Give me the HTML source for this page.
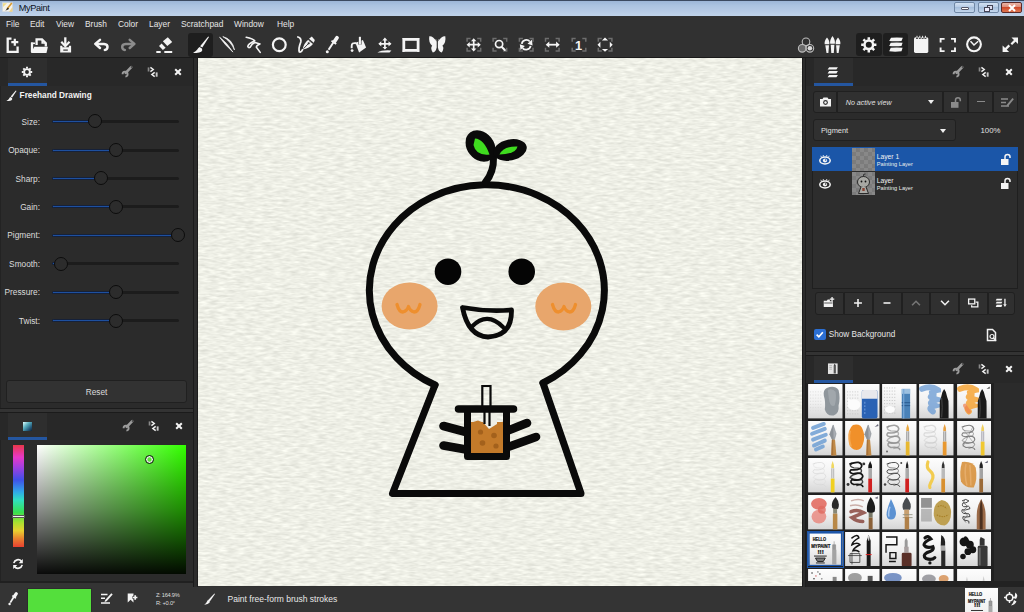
<!DOCTYPE html>
<html><head><meta charset="utf-8"><title>MyPaint</title>
<style>
*{box-sizing:border-box;margin:0;padding:0}
html,body{width:1024px;height:612px;overflow:hidden;background:#313131;font-family:"Liberation Sans",sans-serif;color:#e8e8e8}
.a{position:absolute}
#title{left:0;top:0;width:1024px;height:16px;background:linear-gradient(#9cb6d7 0,#abc3e0 30%,#b7cbe5 70%,#c0d3ea 100%);border-top:1px solid #3b4a60}
#title .t{left:18.700px;top:1.500px;font-size:9.200px;letter-spacing:-0.330px;color:#0a1020;line-height:10px}
.wb{top:2px;height:11px;border:1px solid #6f87a5;border-radius:2px;background:linear-gradient(#d4e2f3,#b3c9e4 50%,#a6bfdd 50%,#c3d6ec)}
#menu{left:0;top:16px;width:1024px;height:16px;background:#313131}
#menu span{position:absolute;top:3px;font-size:8.4px;line-height:10px;color:#e6e6e6}
#tool{left:0;top:32px;width:1024px;height:26px;background:#313131;border-bottom:1px solid #1a1a1a}
.act{background:#1e1e1e;border-radius:3px}
#left{left:0;top:58px;width:193px;height:529px;background:#2b2b2b;box-shadow:inset 1px 0 0 #232323}
#right{left:806px;top:58px;width:218px;height:529px;background:#2b2b2b}
#canvas{left:198px;top:58px;width:604px;height:528px;background:#edeee5;overflow:hidden}
#status{left:0;top:587px;width:1024px;height:25px;background:#343434}
.split{background:#2c2c2c;border-left:1px solid #1b1b1b;border-right:1px solid #1d1d1d}
.hdr{left:0;height:28px;background:#282828}
.tab{top:0;height:28px;width:38.500px;background:#2e2e2e;border-bottom:3px solid #2456a0}
.lbl{font-size:8.3px;line-height:10px;color:#dcdcdc;text-align:right;width:40px;left:0}
.trk{height:3px;background:#1c1c1c;left:52px;width:127px;border-radius:1.500px}
.fil{height:3px;background:#1e50a0;left:52px;border:0.600px solid #15213a;border-radius:1.500px}
.knob{width:14px;height:14px;border-radius:50%;background:#2c2c2c;border:1px solid #0c0c0c}
.btn{background:#303030;border:1px solid #202020;border-radius:3px}
</style></head><body>
<div id="title" class="a"><div class="a t">MyPaint</div>
<!--TITLEICONS_S--><svg class="a" style="left:1px;top:0px" width="14" height="13" viewBox="0 0 14 13"><rect x="1.500" y="1.700" width="10" height="9" fill="#f6f3ea" stroke="#cfd3d8" stroke-width="0.500"/><path d="M2 2.200 H6 L2 6Z" fill="#f0d870" opacity="0.800"/><path d="M11.500 6 V10.700 H8Z" fill="#f0c860" opacity="0.700"/><path d="M10.800 2 L6 8" stroke="#d89a30" stroke-width="1.600"/><path d="M7 6.500 L4.300 9.800 L8 8Z" fill="#1a1a1a"/></svg>
<div class="a wb" style="top:1px;left:954px;width:21px"><div class="a" style="left:6px;top:4px;width:8px;height:3px;background:#fff;border:0.500px solid #556;border-radius:1px"></div></div>
<div class="a wb" style="top:1px;left:977.500px;width:21px"><div class="a" style="left:8px;top:1.500px;width:6px;height:5px;border:1px solid #445;background:#dde"></div><div class="a" style="left:5.500px;top:3.500px;width:6px;height:5px;border:1px solid #445;background:#eef"></div></div>
<div class="a wb" style="top:1px;left:1001px;width:21px;border-color:#5a2a2a;background:linear-gradient(#eab4a6,#dc8672 50%,#cf4a2c 50%,#de7650)"><svg class="a" style="left:5px;top:1px" width="10" height="8" viewBox="0 0 10 8"><path d="M2 1 L8 7 M8 1 L2 7" stroke="#fff" stroke-width="2"/></svg></div>
<!--TITLEICONS_E-->
</div>
<div id="menu" class="a">
<span style="left:6px">File</span><span style="left:30px">Edit</span><span style="left:56px">View</span><span style="left:85px">Brush</span><span style="left:118px">Color</span><span style="left:149px">Layer</span><span style="left:181px">Scratchpad</span><span style="left:234px">Window</span><span style="left:277px">Help</span>
</div>
<div id="tool" class="a">
<!--TOOL_S--><div class="a act" style="left:188px;top:1px;width:25px;height:23.500px"></div>
<div class="a act" style="left:856px;top:1px;width:25.500px;height:23px"></div>
<div class="a act" style="left:883px;top:1px;width:25px;height:23px"></div>
<svg class="a" style="left:0;top:0" width="1024" height="26" viewBox="0 32 1024 26" fill="none" stroke="none">
<g stroke="#f4f4f4" fill="none" stroke-width="2.300">
<!-- new -->
<path d="M11.500 38.700 H7.700 V51.800 H17.600 V46.500"/>
<path d="M14.800 38.700 V45.700 M11.300 42.200 H18.300" stroke-width="2.200"/>
<!-- open -->
<path d="M36.600 45 V39.400 H42 L45.800 43.200 V46.500"/>
<path d="M42.200 39 V43 H46" stroke-width="1.600"/>
<path d="M32 42.500 V52" stroke-width="2.300"/>
<path d="M31 43.300 H35" stroke-width="1.600"/>
<path d="M34.300 46.800 H47.900 L46.500 53 H30.900 Z" fill="#f4f4f4" stroke="none"/>
<!-- save -->
<path d="M65.300 37.300 V45.500" stroke-width="2.300"/>
<path d="M61.300 41.800 L65.300 46.200 L69.500 41.800" stroke-width="2.200"/>
<path d="M60.200 45.700 H62.400 V47.300 H68.900 V45.700 H71.100 V52.600 H60.200Z" fill="#f4f4f4" stroke="none"/>
<path d="M63.300 50.100 H67.800" stroke="#313131" stroke-width="1.200"/>
<!-- undo -->
<path d="M100 39.900 L95.300 43.900 L100 48" stroke-width="2.500" stroke-linecap="round" stroke-linejoin="round"/>
<path d="M96 43.900 H104 Q107.700 44.200 107.500 47 Q107.300 49.800 104.800 50" stroke-width="2.500" stroke-linecap="round"/>
</g>
<g stroke="#8c8c8c" fill="none" stroke-width="2.500" stroke-linecap="round" stroke-linejoin="round">
<path d="M129.700 39.900 L134.400 43.900 L129.700 48"/>
<path d="M133.700 43.900 H125.700 Q122 44.200 122.200 47 Q122.400 49.800 124.900 50"/>
</g>
<!-- eraser -->
<g fill="#f4f4f4">
<path d="M167.800 37.300 L172.200 42.100 L167.300 46 L162.900 41.200Z"/>
<path d="M161.600 43.400 L165.600 47.800 L162.900 50 L159 46Z"/>
<rect x="156.300" y="51" width="4.400" height="2"/><rect x="164.300" y="51" width="7.900" height="2"/>
</g>
<!-- brush -->
<path d="M208.200 36.400 L209 37 L202.300 47.600 L200.100 46.200Z" fill="#f4f4f4"/>
<path d="M199.600 47 L201.900 48.500 Q203 50.300 201.300 51.800 Q198.500 53.500 193 52.700 Q196 51.600 197.300 49.600 Q198.200 47.800 199.600 47Z" fill="#f4f4f4"/>
<!-- ink -->
<path d="M219.600 37.200 Q226.500 42 232.900 52.100 Q224.500 44.500 219.600 37.200Z" fill="#f4f4f4" stroke="#f4f4f4" stroke-width="0.700"/>
<path d="M222.800 36.600 Q232.500 39 234.500 50 Q231 41.500 222.800 36.600Z" fill="#f4f4f4" stroke="#f4f4f4" stroke-width="0.700"/>
<!-- freehand -->
<path d="M246.200 37.200 Q253 38.500 254.700 40.800 Q248 44 247.800 46.500 Q248.500 48.300 250 47.300 Q252 43.500 255 42.600 L260 43.900 Q256 45.500 256.400 47.200 L260.200 52.400" stroke="#f4f4f4" stroke-width="1.600" fill="none" stroke-linecap="round" stroke-linejoin="round"/>
<!-- circle -->
<circle cx="279.300" cy="44.800" r="6.400" stroke="#f4f4f4" stroke-width="2.200"/>
<!-- pen -->
<path d="M297.900 37 Q301.500 38 300.800 42 Q298 49 299.500 52 Q301.500 52.500 302.500 49.800" stroke="#f4f4f4" stroke-width="1.800" fill="none" stroke-linecap="round"/>
<path d="M302.800 49.400 Q303.500 43.500 308.300 39.800 L313.200 43.800 Q309.500 48.500 302.800 49.400Z" fill="#f4f4f4"/>
<path d="M309 38.800 L311.800 36.600 L314.800 40 L313.800 42.800Z" fill="#f4f4f4"/>
<path d="M303.500 48.700 L308.500 43.500" stroke="#313131" stroke-width="0.900"/>
<circle cx="308.700" cy="43.300" r="1.100" fill="#313131"/>
<path d="M308.700 40.300 L312.800 43.600" stroke="#313131" stroke-width="0.700"/>
<!-- picker -->
<path d="M337 37.700 L334.300 41.700" stroke="#f4f4f4" stroke-width="3.800" stroke-linecap="round"/>
<path d="M334 41.500 L328.600 49.800" stroke="#f4f4f4" stroke-width="2"/>
<path d="M331.500 40.800 L336.200 44" stroke="#f4f4f4" stroke-width="1.700"/>
<circle cx="327.300" cy="51.800" r="1.500" fill="#f4f4f4"/>
<!-- fill -->
<path d="M355.400 42.700 L362.900 40 L366.100 47.600 L359.100 52.400Z" fill="#f4f4f4"/>
<path d="M359.900 38 V44.600" stroke="#313131" stroke-width="3.200"/>
<path d="M359.900 36.800 V44.600" stroke="#f4f4f4" stroke-width="2.100"/>
<path d="M356 43.200 Q351.600 42.500 351.700 46 V48.200" stroke="#f4f4f4" stroke-width="1.900" fill="none"/>
<circle cx="352.100" cy="50.600" r="1.400" fill="#f4f4f4"/>
<!-- move layer -->
<path d="M384.900 39 V48.500 M379.500 43.800 H390.300" stroke="#f4f4f4" stroke-width="1.700"/>
<path d="M384.900 37.600 L382.300 40.600 H387.500Z M384.900 49.600 L382.500 47 H387.300Z M378.300 43.800 L381.300 41.200 V46.400Z M391.500 43.800 L388.500 41.200 V46.400Z" fill="#f4f4f4"/>
<path d="M377.400 52.600 Q382 49.600 391.400 50.400 L389.500 52.600Z" fill="#f4f4f4"/>
<!-- frame -->
<rect x="403.800" y="39.400" width="14.300" height="11" stroke="#f4f4f4" stroke-width="2.800"/>
<path d="M402.600 38.600 h2 M417.200 38.600 h2 M402.600 51.300 h2 M417.200 51.300 h2" stroke="#f4f4f4" stroke-width="1.400"/>
<!-- butterfly -->
<path d="M436.700 41.500 Q432.500 35.500 429.300 36.200 Q428.300 42.500 432.200 45.800 Q430 48 432.800 52.600 Q435.800 52 436.700 47.500Z M437.900 41.500 Q442.100 35.500 445.300 36.200 Q446.300 42.500 442.400 45.800 Q444.600 48 441.800 52.600 Q438.800 52 437.900 47.500Z" fill="#f4f4f4"/>
<path d="M436.300 40.500 L435.800 39.300 M438.300 40.500 L438.800 39.300" stroke="#f4f4f4" stroke-width="0.600"/>
<!-- view tools frames -->
<g stroke="#6e6e6e" stroke-width="1.500" fill="none">
<g id="fr"><path d="M467.100 41.800 V38.600 H470.600 M477.200 38.600 H480.700 V41.800 M480.700 47.800 V51 H477.200 M470.600 51 H467.100 V47.800"/></g>
<use href="#fr" x="26"/><use href="#fr" x="52.300"/><use href="#fr" x="78.400"/><use href="#fr" x="105.100"/><use href="#fr" x="131.200"/>
</g>
<!-- pan -->
<path d="M473.700 40 V49.500 M468.500 44.700 H479" stroke="#f4f4f4" stroke-width="1.700"/>
<path d="M473.700 38.300 L471 41.300 H476.400Z M473.700 51.400 L471 48.400 H476.400Z M466.600 44.700 L469.700 42 V47.400Z M480.800 44.700 L477.700 42 V47.400Z" fill="#f4f4f4"/>
<!-- zoom -->
<circle cx="499.100" cy="44.100" r="3.600" stroke="#f4f4f4" stroke-width="1.700"/>
<path d="M501.800 47 L504.800 50" stroke="#f4f4f4" stroke-width="2" stroke-linecap="round"/>
<!-- rotate -->
<path d="M521.800 43.800 A4.600 4.600 0 0 1 529.800 41.500 M530.600 45.800 A4.600 4.600 0 0 1 522.600 48.100" stroke="#f4f4f4" stroke-width="1.800" fill="none"/>
<path d="M531.900 39.800 L532.600 45.400 L527.500 43.800Z M520.500 49.900 L519.800 44.300 L524.900 45.900Z" fill="#f4f4f4"/>
<!-- mirror -->
<path d="M548 44.700 H557.500" stroke="#f4f4f4" stroke-width="1.800"/>
<path d="M545.700 44.700 L549.300 41.600 V47.800Z M559.700 44.700 L556.100 41.600 V47.800Z" fill="#f4f4f4"/>
<!-- fit -->
<path d="M605 37.600 L601.900 40.500 H608.100Z M605 51.800 L601.900 48.900 H608.100Z M597.500 44.700 L600.400 41.700 V47.700Z M612.700 44.700 L609.800 41.700 V47.700Z" fill="#f4f4f4"/>
<!-- colour circles -->
<g stroke="#bdbdbd" stroke-width="1.100" fill="none">
<circle cx="806" cy="41.800" r="3.800"/><circle cx="802.200" cy="48.300" r="3.800" fill="#6a6a6a"/><circle cx="809.900" cy="48.300" r="3.800"/><circle cx="809.900" cy="48.300" r="2.300" fill="#dcdcdc" stroke="none"/>
</g>
<!-- brushes -->
<g fill="#f4f4f4">
<path d="M827 37.500 Q830 41 829.300 44.300 H824.700 Q824 41 827 37.500Z M825.300 45.300 H829 L828.400 53 H826.500Z"/>
<path d="M832.500 36 Q835.500 40 834.800 43.800 H830.200 Q829.500 40 832.500 36Z M830.700 44.800 H834.400 L833.800 53 H831.300Z"/>
<path d="M838 37.500 Q841 41 840.300 44.300 H835.700 Q835 41 838 37.500Z M836.100 45.300 H839.800 L838.600 53 H836.800Z"/>
</g>
<!-- gear -->
<g transform="translate(868.800 44.800)">
<circle r="4.300" stroke="#f4f4f4" stroke-width="2.500" fill="none"/>
<g stroke="#f4f4f4" stroke-width="2.500"><path d="M0 -7.600 V-5 M0 7.600 V5 M-7.600 0 H-5 M7.600 0 H5 M-5.400 -5.400 L-3.600 -3.600 M5.400 5.400 L3.600 3.600 M-5.400 5.400 L-3.600 3.600 M5.400 -5.400 L3.600 -3.600"/></g>
</g>
<!-- layers -->
<g fill="#f4f4f4"><path d="M891 37.800 Q897 37 902.800 37.800 L901.500 41 Q895 41.500 889.200 41Z M890.700 42.800 Q897 42.200 902.600 42.800 L901.500 46 Q895 46.600 889.200 46Z M890.700 47.800 Q897 47.200 902.600 47.800 L901.500 51.300 Q895 52 889.200 51.300Z"/></g>
<!-- notepad -->
<path d="M915.500 37.300 Q914 37.300 914 38.800 V51.200 Q914 52.900 915.500 52.900 H926.800 Q928.300 52.900 928.300 51.200 V38.800 Q928.300 37.300 926.800 37.300Z" fill="#f4f4f4"/>
<path d="M917 35.600 V39 M919.800 35.600 V39 M922.600 35.600 V39 M925.400 35.600 V39" stroke="#313131" stroke-width="1.800"/>
<path d="M917 35.800 V38.200 M919.800 35.800 V38.200 M922.600 35.800 V38.200 M925.400 35.800 V38.200" stroke="#f4f4f4" stroke-width="1"/>
<!-- fullscreen -->
<path d="M940.600 42.500 V38.900 H944.600 M951 38.900 H955 V42.500 M955 47.500 V51.100 H951 M944.600 51.100 H940.600 V47.500" stroke="#f4f4f4" stroke-width="1.900"/>
<!-- clock -->
<circle cx="974" cy="44.300" r="6.900" stroke="#f4f4f4" stroke-width="2.100"/>
<path d="M970.500 41.300 L974 45 L978.200 41.300" stroke="#f4f4f4" stroke-width="1.500" fill="none"/>
<!-- expand -->
<path d="M1011.500 37.600 H1018 V44.100Z M1002.600 45.600 V52.100 H1009.100Z" fill="#f4f4f4"/>
<path d="M1016 39.600 L1011.300 44.300 M1004.600 50.100 L1009.300 45.400" stroke="#f4f4f4" stroke-width="2.200"/>
</svg>
<div class="a" style="left:575px;top:6.700px;font-size:12.800px;font-weight:bold;line-height:13px;color:#f4f4f4">1</div>
<!--TOOL_E-->
</div>
<div id="left" class="a">
<!--LEFT_S--><div class="a hdr" style="top:0;width:193px"></div>
<div class="a tab" style="left:8px"></div>
<svg class="a" style="left:19px;top:6.1px" width="16" height="16" viewBox="-8 -8 16 16"><circle r="2.900" stroke="#f4f4f4" stroke-width="1.900" fill="none"/><g stroke="#f4f4f4" stroke-width="1.900"><path d="M0 -5.200 V-3.400 M0 5.200 V3.400 M-5.200 0 H-3.400 M5.200 0 H3.400 M-3.700 -3.700 L-2.500 -2.500 M3.700 3.700 L2.500 2.500 M-3.700 3.700 L-2.500 2.500 M3.700 -3.700 L2.500 -2.500"/></g></svg>
<svg class="a" style="left:118.4px;top:4.0px" width="70" height="20" viewBox="-60 -10 70 20">
<path d="M-46.800 -4.800 L-52.300 0.800" stroke="#9c9c9c" stroke-width="2.600" stroke-linecap="round" fill="none"/>
<circle cx="-46.600" cy="-5" r="0.700" fill="#2a2a2a"/>
<path d="M-55.400 2.200 A2.500 2.500 0 1 1 -52.600 4.600" stroke="#9c9c9c" stroke-width="1.900" fill="none"/>
<rect x="-30.300" y="-4.600" width="1.700" height="4.100" fill="#8a8a8a"/>
<path d="M-27.600 -4.600 L-24.800 -2.500 L-27.600 -0.400" stroke="#f0f0f0" stroke-width="1.500" fill="none"/>
<path d="M-23.300 0.400 L-26.100 2.500 L-23.300 4.600" stroke="#f0f0f0" stroke-width="1.500" fill="none"/>
<rect x="-22.300" y="0.400" width="1.900" height="4.300" fill="#c8c8c8"/>
<path d="M-2.800 -2.800 L2.800 2.800 M2.800 -2.800 L-2.800 2.800" stroke="#f4f4f4" stroke-width="2"/>
</svg>
<svg class="a" style="left:5px;top:30px" width="14" height="14" viewBox="5 88 14 14"><path d="M15.800 90.400 L16.500 91 L12.200 97.600 L10.700 96.600Z" fill="#f4f4f4"/><path d="M10.300 97 L12 98.100 Q12.700 99.300 11.500 100.300 Q9.800 101.300 6.300 100.700 Q8.200 100 9 98.700 Q9.500 97.500 10.300 97Z" fill="#f4f4f4"/></svg>
<div class="a" style="left:19.600px;top:32.9px;font-size:8.280px;font-weight:bold;line-height:10px;color:#f2f2f2;white-space:nowrap">Freehand Drawing</div>
<div class="a lbl" style="top:58.6px">Size:</div>
<div class="a trk" style="top:62.1px"></div>
<div class="a fil" style="top:62.1px;width:42.7px"></div>
<div class="a knob" style="left:87.5px;top:56.4px"></div>
<div class="a lbl" style="top:87.0px">Opaque:</div>
<div class="a trk" style="top:90.5px"></div>
<div class="a fil" style="top:90.5px;width:64.3px"></div>
<div class="a knob" style="left:109.1px;top:84.8px"></div>
<div class="a lbl" style="top:115.5px">Sharp:</div>
<div class="a trk" style="top:119.0px"></div>
<div class="a fil" style="top:119.0px;width:49.6px"></div>
<div class="a knob" style="left:94.4px;top:113.3px"></div>
<div class="a lbl" style="top:143.9px">Gain:</div>
<div class="a trk" style="top:147.4px"></div>
<div class="a fil" style="top:147.4px;width:64.2px"></div>
<div class="a knob" style="left:109.0px;top:141.8px"></div>
<div class="a lbl" style="top:172.4px">Pigment:</div>
<div class="a trk" style="top:175.9px"></div>
<div class="a fil" style="top:175.9px;width:126.5px"></div>
<div class="a knob" style="left:171.3px;top:170.2px"></div>
<div class="a lbl" style="top:200.9px">Smooth:</div>
<div class="a trk" style="top:204.4px"></div>
<div class="a fil" style="top:204.4px;width:9.0px"></div>
<div class="a knob" style="left:53.8px;top:198.7px"></div>
<div class="a lbl" style="top:229.3px">Pressure:</div>
<div class="a trk" style="top:232.8px"></div>
<div class="a fil" style="top:232.8px;width:64.2px"></div>
<div class="a knob" style="left:109.0px;top:227.1px"></div>
<div class="a lbl" style="top:257.8px">Twist:</div>
<div class="a trk" style="top:261.2px"></div>
<div class="a fil" style="top:261.2px;width:64.2px"></div>
<div class="a knob" style="left:109.0px;top:255.6px"></div>
<div class="a btn" style="left:6px;top:322px;width:181px;height:23px;background:#323232;text-align:center;font-size:8.300px;line-height:22px;color:#dcdcdc">Reset</div>
<div class="a" style="left:0;top:350px;width:193px;height:5px;background:#333;border-top:1px solid #1b1b1b;border-bottom:1px solid #1b1b1b"></div>
<div class="a hdr" style="top:355px;width:193px;height:27px"></div>
<div class="a tab" style="left:8px;top:355px;height:27px"></div>
<div class="a" style="left:22.500px;top:363.5px;width:9.500px;height:9px;background:linear-gradient(135deg,#dff 0,#5ab 40%,#257 75%,#123 100%)"></div>
<svg class="a" style="left:118.5px;top:358.0px" width="70" height="20" viewBox="-60 -10 70 20">
<path d="M-46.800 -4.800 L-52.300 0.800" stroke="#9c9c9c" stroke-width="2.600" stroke-linecap="round" fill="none"/>
<circle cx="-46.600" cy="-5" r="0.700" fill="#2a2a2a"/>
<path d="M-55.400 2.200 A2.500 2.500 0 1 1 -52.600 4.600" stroke="#9c9c9c" stroke-width="1.900" fill="none"/>
<rect x="-30.300" y="-4.600" width="1.700" height="4.100" fill="#8a8a8a"/>
<path d="M-27.600 -4.600 L-24.800 -2.500 L-27.600 -0.400" stroke="#f0f0f0" stroke-width="1.500" fill="none"/>
<path d="M-23.300 0.400 L-26.100 2.500 L-23.300 4.600" stroke="#f0f0f0" stroke-width="1.500" fill="none"/>
<rect x="-22.300" y="0.400" width="1.900" height="4.300" fill="#c8c8c8"/>
<path d="M-2.800 -2.800 L2.800 2.800 M2.800 -2.800 L-2.800 2.800" stroke="#f4f4f4" stroke-width="2"/>
</svg>
<div class="a" style="left:13px;top:387px;width:11px;height:102px;background:linear-gradient(#e8384a 0,#e838c8 12%,#a040e0 22%,#4050e8 34%,#30a8e8 46%,#30e0c0 54%,#38e050 66%,#a8e030 76%,#e8d030 84%,#e88030 92%,#e84030 100%)"></div>
<div class="a" style="left:12px;top:456.5px;width:13px;height:3px;background:#f4f4f4;border:0.500px solid #555"></div>
<div class="a" style="left:37px;top:387px;width:149px;height:128.500px;background:linear-gradient(to bottom,rgba(0,0,0,0) 0,rgba(0,0,0,0.450) 50%,rgba(0,0,0,0.960) 100%),linear-gradient(to right,#fff,#33ff00)"></div>
<div class="a" style="left:144.5px;top:397.1px;width:9px;height:9px;border-radius:50%;border:1px solid #151515;box-shadow:inset 0 0 0 1.300px #f0f0f0"></div>
<svg class="a" style="left:11.200px;top:499.4px" width="14" height="14" viewBox="0 0 16 16"><path d="M3.200 7 A5 5 0 0 1 12 5 M12.800 9 A5 5 0 0 1 4 11" stroke="#f4f4f4" stroke-width="1.900" fill="none"/><path d="M13.500 2.200 V7 H8.800Z M2.500 13.800 V9 H7.200Z" fill="#f4f4f4"/></svg>
<div class="a" style="left:0;top:522.5px;width:193px;height:2.500px;background:#202020"></div>
<div class="a" style="left:0;top:525px;width:193px;height:4px;background:#343434"></div><!--LEFT_E-->
</div>
<div class="a split" style="left:193px;top:58px;width:5px;height:529px"></div>
<div id="canvas" class="a">
<!--CANVAS_S--><svg class="a" style="left:0;top:0" width="604" height="528" viewBox="198 58 604 528">
<defs>
<filter id="paper" x="0" y="0" width="100%" height="100%" color-interpolation-filters="sRGB">
<feTurbulence type="fractalNoise" baseFrequency="0.11 0.42" numOctaves="2" seed="7"/>
<feColorMatrix type="matrix" values="0.18 0 0 0 0.843  0.18 0 0 0 0.847  0.18 0 0 0 0.811  0 0 0 0 1"/>
</filter>
</defs>
<rect x="198" y="58" width="604" height="528" fill="#eeefe6"/>
<rect x="198" y="58" width="604" height="528" filter="url(#paper)"/>
<!-- cheeks -->
<ellipse cx="409.6" cy="306" rx="28" ry="23.6" fill="#e8a66c"/>
<ellipse cx="563.3" cy="306.5" rx="28" ry="24" fill="#e8a66c"/>
<path d="M397 304.500 Q399 312 403 312 Q407 311 408.500 306.500 Q410 311 414 312 Q418 312 420 304.500" fill="none" stroke="#ee8f2e" stroke-width="3.300" stroke-linecap="round" stroke-linejoin="round"/>
<path d="M552.500 304.500 Q554.500 312 558.500 312 Q562.500 311 564 306.500 Q565.500 311 569.500 312 Q573.500 312 575.500 304.500" fill="none" stroke="#ee8f2e" stroke-width="3.300" stroke-linecap="round" stroke-linejoin="round"/>
<!-- body -->
<path d="M435 385 L392.5 493.5 L581 493.5 L543 383" fill="none" stroke="#0a0a0a" stroke-width="7" stroke-linejoin="round" stroke-linecap="round"/>
<!-- head: open ellipse arc -->
<path d="M435 385 A117.5 105.5 0 1 1 543 383" fill="none" stroke="#0a0a0a" stroke-width="7" stroke-linecap="round"/>
<!-- eyes -->
<circle cx="448" cy="271.7" r="13.3" fill="#050505"/>
<circle cx="521.7" cy="271.7" r="13.3" fill="#050505"/>
<!-- mouth -->
<path d="M462.5 307.5 Q487 312 511.5 310 Q512 336 488 337 Q468 336 462.5 307.5 Z" fill="none" stroke="#0a0a0a" stroke-width="4.800" stroke-linejoin="round"/>
<path d="M472 326.500 Q487 311 503 327" fill="none" stroke="#0a0a0a" stroke-width="4.200" stroke-linecap="round"/>
<!-- sprout -->
<path d="M493.5 157 Q494 172 485.5 182" fill="none" stroke="#0a0a0a" stroke-width="7" stroke-linecap="round"/>
<ellipse cx="480.5" cy="146" rx="13.5" ry="17" transform="rotate(-38 480.5 146)" fill="#0a0a0a"/>
<ellipse cx="510" cy="150" rx="17" ry="10.5" transform="rotate(-12 510 150)" fill="#0a0a0a"/>
<path d="M475 138.5 Q484 139 489.5 154.5 Q476 156 473.5 145 Z" fill="#3fdc1f"/>
<path d="M499.5 154.5 Q503 146 517.5 146.5 Q516 154 499.5 154.5 Z" fill="#3fdc1f"/>
<!-- cup -->
<rect x="471" y="422" width="34" height="31" fill="#c37a2a"/>
<path d="M470 423 L478 420.5 L484 423 L489 428.5 L498 423.5 L503.5 421.5 L505 428 L470 428Z" fill="#c37a2a"/>
<path d="M482 421 L489 429 L497 424 L497 414 L482 414Z" fill="#eeefe6"/>
<circle cx="480.5" cy="432" r="2.6" fill="#a3611c"/><circle cx="494" cy="435.5" r="2.8" fill="#a3611c"/><circle cx="482.5" cy="443" r="2.8" fill="#a3611c"/><circle cx="496" cy="446" r="2.6" fill="#a3611c"/>
<path d="M482.3 409 V386 H490.5 V409 M484.5 412 V424 M489.5 412 V426" fill="none" stroke="#0a0a0a" stroke-width="2.2"/>
<path d="M458.5 409 H513.5" stroke="#0a0a0a" stroke-width="7.5" stroke-linecap="round"/>
<path d="M467.5 411 V456.5 H506.5 V411" fill="none" stroke="#0a0a0a" stroke-width="7" stroke-linejoin="round"/>
<!-- arms -->
<path d="M443.5 426 L466 432 M443.5 445.5 L466 449.5 M508 430.5 L527 423 M508 447 L536 437" stroke="#0a0a0a" stroke-width="8.6" stroke-linecap="round"/>
</svg>
<!--CANVAS_E-->
</div>
<div class="a split" style="left:802px;top:58px;width:4px;height:529px"></div>
<div id="right" class="a">
<!--RIGHT_S--><div class="a hdr" style="top:0;width:218px;height:28px"></div>
<div class="a tab" style="left:8px;top:0"></div>
<svg class="a" style="left:18px;top:6px" width="16" height="16" viewBox="0 0 16 16"><path d="M5.200 3.300 H13.900 L12.400 5.600 H3.600Z M5.200 7.100 H13.900 L12.400 9.400 H3.600Z M5.200 10.900 H13.900 L12.400 13.300 H3.600Z" fill="#f4f4f4"/></svg>
<svg class="a" style="left:142.9px;top:4.0px" width="70" height="20" viewBox="-60 -10 70 20">
<path d="M-46.800 -4.800 L-52.300 0.800" stroke="#9c9c9c" stroke-width="2.600" stroke-linecap="round" fill="none"/>
<circle cx="-46.600" cy="-5" r="0.700" fill="#2a2a2a"/>
<path d="M-55.400 2.200 A2.500 2.500 0 1 1 -52.600 4.600" stroke="#9c9c9c" stroke-width="1.900" fill="none"/>
<rect x="-30.300" y="-4.600" width="1.700" height="4.100" fill="#8a8a8a"/>
<path d="M-27.600 -4.600 L-24.800 -2.500 L-27.600 -0.400" stroke="#f0f0f0" stroke-width="1.500" fill="none"/>
<path d="M-23.300 0.400 L-26.100 2.500 L-23.300 4.600" stroke="#f0f0f0" stroke-width="1.500" fill="none"/>
<rect x="-22.300" y="0.400" width="1.900" height="4.300" fill="#c8c8c8"/>
<path d="M-2.800 -2.800 L2.800 2.800 M2.800 -2.800 L-2.800 2.800" stroke="#f4f4f4" stroke-width="2"/>
</svg>
<div class="a btn" style="left:6.5px;top:32.5px;width:24.1px;height:22.5px;border-radius:3px 0 0 3px"><svg class="a" style="left:5px;top:4.500px" width="13" height="12" viewBox="0 0 13 12"><path d="M1 3 H3.500 L4.500 1.500 H8.500 L9.500 3 H12 V10.500 H1Z" fill="#f2f2f2"/><circle cx="6.500" cy="6.500" r="2.400" fill="#303030"/><circle cx="6.500" cy="6.500" r="1.200" fill="#f2f2f2"/></svg></div>
<div class="a btn" style="left:30.6px;top:32.5px;width:106.6px;height:22.5px;border-radius:0"><div class="a" style="left:8.200px;top:6.800px;font-size:7.100px;font-style:italic;line-height:10px;color:#e0e0e0;white-space:nowrap">No active view</div><div class="a" style="left:90.400px;top:8.400px;border:3.700px solid transparent;border-top:4px solid #f0f0f0;border-bottom:0"></div></div>
<div class="a btn" style="left:137.2px;top:32.5px;width:24.8px;height:22.5px;border-radius:0"><svg class="a" style="left:6.300px;top:4.200px" width="12" height="13" viewBox="0 0 12 13"><rect x="1" y="6" width="7.500" height="5.800" fill="#8a8a8a"/><path d="M5.500 6 V4 Q5.500 1.700 8 1.700 Q10.300 1.700 10.300 4 V5.200" stroke="#8a8a8a" stroke-width="1.500" fill="none"/></svg></div>
<div class="a btn" style="left:162.0px;top:32.5px;width:25.0px;height:22.5px;border-radius:0"><div class="a" style="left:8.400px;top:9.300px;width:7.600px;height:1.700px;background:#8a8a8a"></div></div>
<div class="a btn" style="left:187.0px;top:32.5px;width:25.0px;height:22.5px;border-radius:0 3px 3px 0"><svg class="a" style="left:5.500px;top:4.500px" width="14" height="13" viewBox="0 0 14 13"><path d="M1 3 H8 M1 6.500 H6 M1 10 H9" stroke="#8a8a8a" stroke-width="1.600"/><path d="M12.500 2 L7 8.500 L6.500 10.500 L8.500 9.800 L13.800 3.200Z" fill="#8a8a8a"/></svg></div>
<div class="a btn" style="left:6.5px;top:61.3px;width:143.5px;height:22.2px;"><div class="a" style="left:7.400px;top:6px;font-size:7.450px;line-height:10px;color:#e0e0e0">Pigment</div><div class="a" style="left:126.400px;top:8.700px;border:3.700px solid transparent;border-top:4px solid #f0f0f0;border-bottom:0"></div></div>
<div class="a" style="left:174.5px;top:67.5px;font-size:7.850px;line-height:10px;color:#e0e0e0">100%</div>
<div class="a" style="left:6px;top:89px;width:206px;height:141.500px;background:#2d2d2d;border:1px solid #1f1f1f"></div>
<div class="a" style="left:6px;top:89.2px;width:206px;height:24.300px;background:#1b56a8"></div>
<svg class="a" style="left:11.8px;top:96.5px" width="14" height="10" viewBox="0 0 14 10"><ellipse cx="7" cy="5.500" rx="5.200" ry="3.500" fill="#1b56a8" stroke="#f6f6f6" stroke-width="1.500"/><circle cx="7" cy="5.500" r="2.100" fill="#f6f6f6"/><circle cx="7.600" cy="5" r="0.800" fill="#1b56a8"/><path d="M3.500 2.200 L2.800 0.800 M5.500 1.400 L5.200 0 M8.500 1.400 L8.800 0 M10.500 2.200 L11.200 0.800" stroke="#f6f6f6" stroke-width="0.800"/></svg>
<div class="a" style="left:46.3px;top:89.7px;width:22.700px;height:23.500px;background-color:#888;background-image:linear-gradient(45deg,#7c7c7c 25%,transparent 25%,transparent 75%,#7c7c7c 75%),linear-gradient(45deg,#7a7a7a 25%,transparent 25%,transparent 75%,#7c7c7c 75%);background-size:8px 8px;background-position:0 0,4px 4px"></div>
<div class="a" style="left:70.8px;top:93.5px;font-size:6.700px;line-height:9px;color:#f2f2f2;white-space:nowrap">Layer 1</div>
<div class="a" style="left:70.8px;top:102.3px;font-size:5.650px;line-height:8px;color:#ececec;white-space:nowrap">Painting Layer</div>
<svg class="a" style="left:194.0px;top:94.7px" width="12" height="13" viewBox="0 0 12 13"><rect x="1" y="6" width="7.500" height="6" fill="#f4f4f4"/><path d="M5 6 V3.800 Q5 1.500 7.500 1.500 Q10 1.500 10 3.800 V5" stroke="#f4f4f4" stroke-width="1.500" fill="none"/></svg>
<svg class="a" style="left:11.8px;top:120.6px" width="14" height="10" viewBox="0 0 14 10"><ellipse cx="7" cy="5.500" rx="5.200" ry="3.500" fill="#2c2c2c" stroke="#f6f6f6" stroke-width="1.500"/><circle cx="7" cy="5.500" r="2.100" fill="#f6f6f6"/><circle cx="7.600" cy="5" r="0.800" fill="#2c2c2c"/><path d="M3.500 2.200 L2.800 0.800 M5.500 1.400 L5.200 0 M8.500 1.400 L8.800 0 M10.500 2.200 L11.200 0.800" stroke="#f6f6f6" stroke-width="0.800"/></svg>
<div class="a" style="left:46.3px;top:113.8px;width:22.700px;height:23.500px;background-color:#888;background-image:linear-gradient(45deg,#7c7c7c 25%,transparent 25%,transparent 75%,#7c7c7c 75%),linear-gradient(45deg,#7a7a7a 25%,transparent 25%,transparent 75%,#7c7c7c 75%);background-size:8px 8px;background-position:0 0,4px 4px"><svg class="a" style="left:2px;top:1px" width="19" height="22" viewBox="0 0 19 22"><ellipse cx="9.500" cy="9" rx="6" ry="5.500" fill="#a8a8a4" stroke="#2a2a2a" stroke-width="1"/><path d="M7 14 L4.500 20.500 H14.500 L12 14" fill="#a8a8a4" stroke="#2a2a2a" stroke-width="1"/><path d="M9.500 3.500 V1.500 L11.500 1" stroke="#222" stroke-width="0.800" fill="none"/><circle cx="7.500" cy="8.500" r="0.900" fill="#111"/><circle cx="11.500" cy="8.500" r="0.900" fill="#111"/><rect x="8.300" y="15" width="2.400" height="3" fill="#843"/></svg></div>
<div class="a" style="left:70.8px;top:117.6px;font-size:6.700px;line-height:9px;color:#f2f2f2;white-space:nowrap">Layer</div>
<div class="a" style="left:70.8px;top:126.4px;font-size:5.650px;line-height:8px;color:#ececec;white-space:nowrap">Painting Layer</div>
<svg class="a" style="left:194.0px;top:118.8px" width="12" height="13" viewBox="0 0 12 13"><rect x="1" y="6" width="7.500" height="6" fill="#f4f4f4"/><path d="M5 6 V3.800 Q5 1.500 7.500 1.500 Q10 1.500 10 3.800 V5" stroke="#f4f4f4" stroke-width="1.500" fill="none"/></svg>
<div class="a btn" style="left:9.0px;top:233.5px;width:28.6px;height:23.0px;border-radius:3px 0 0 3px"><svg class="a" style="left:6.3px;top:3.500px" width="14" height="14" viewBox="0 0 16 16"><path d="M2 5.500 H5.500 L6.500 4 H9 V6 H12.500 V12.500 H2Z" fill="#f2f2f2"/><path d="M11.500 1 V6 M9 3.500 H14" stroke="#f2f2f2" stroke-width="1.500"/><path d="M2.500 8 H12" stroke="#303030" stroke-width="0.900"/></svg></div>
<div class="a btn" style="left:37.6px;top:233.5px;width:29.0px;height:23.0px;border-radius:0"><svg class="a" style="left:6.5px;top:3.500px" width="14" height="14" viewBox="0 0 16 16"><path d="M8 3.500 V12.500 M3.500 8 H12.500" stroke="#f2f2f2" stroke-width="1.800"/></svg></div>
<div class="a btn" style="left:66.6px;top:233.5px;width:29.0px;height:23.0px;border-radius:0"><svg class="a" style="left:6.5px;top:3.500px" width="14" height="14" viewBox="0 0 16 16"><path d="M4 8 H12" stroke="#f2f2f2" stroke-width="1.800"/></svg></div>
<div class="a btn" style="left:95.6px;top:233.5px;width:28.8px;height:23.0px;border-radius:0"><svg class="a" style="left:6.4px;top:3.500px" width="14" height="14" viewBox="0 0 16 16"><path d="M3.500 10.500 L8 6 L12.500 10.500" stroke="#777" stroke-width="1.800" fill="none"/></svg></div>
<div class="a btn" style="left:124.4px;top:233.5px;width:28.6px;height:23.0px;border-radius:0"><svg class="a" style="left:6.3px;top:3.500px" width="14" height="14" viewBox="0 0 16 16"><path d="M3.500 5.500 L8 10 L12.500 5.500" stroke="#f2f2f2" stroke-width="1.800" fill="none"/></svg></div>
<div class="a btn" style="left:153.0px;top:233.5px;width:28.7px;height:23.0px;border-radius:0"><svg class="a" style="left:6.4px;top:3.500px" width="14" height="14" viewBox="0 0 16 16"><rect x="3" y="3.500" width="7" height="5.500" stroke="#f2f2f2" stroke-width="1.500" fill="none"/><path d="M11 7 H13.500 V12.500 H6.500 V10.500" stroke="#f2f2f2" stroke-width="1.500" fill="none"/></svg></div>
<div class="a btn" style="left:181.7px;top:233.5px;width:27.3px;height:23.0px;border-radius:0 3px 3px 0"><svg class="a" style="left:5.6px;top:3.500px" width="14" height="14" viewBox="0 0 16 16"><path d="M3 3 H9.500 L8.500 5 H2Z M3 6.500 H9.500 L8.500 8.500 H2Z M3 10 H9.500 L8.500 12.500 H2Z" fill="#f2f2f2"/><path d="M12.500 3 V10" stroke="#f2f2f2" stroke-width="1.500"/><path d="M10.500 9.500 H14.500 L12.500 12.500Z" fill="#f2f2f2"/></svg></div>
<div class="a" style="left:8.4px;top:271px;width:11.200px;height:11.200px;background:#2b6fd4;border-radius:2px"><svg class="a" style="left:1px;top:1px" width="9.200" height="9.200" viewBox="0 0 10 10"><path d="M1.800 5 L4.200 7.500 L8.500 2.500" stroke="#fff" stroke-width="1.800" fill="none"/></svg></div>
<div class="a" style="left:22.8px;top:271.5px;font-size:8.200px;line-height:10px;color:#e6e6e6;white-space:nowrap">Show Background</div>
<svg class="a" style="left:179px;top:270px" width="13" height="14" viewBox="0 0 13 14"><path d="M2.500 1.500 H7.500 L10.500 4.500 V12.500 H2.500Z" stroke="#f2f2f2" stroke-width="1.500" fill="none"/><circle cx="7" cy="8.500" r="2" stroke="#f2f2f2" stroke-width="1.200" fill="#2a2a2a"/><path d="M8.500 10 L11 12.800" stroke="#f2f2f2" stroke-width="1.500"/></svg>
<div class="a" style="left:0;top:292.5px;width:218px;height:5px;background:#333;border-top:1px solid #1b1b1b;border-bottom:1px solid #1b1b1b"></div>
<div class="a hdr" style="top:297.5px;width:218px;height:27px"></div>
<div class="a tab" style="left:8px;top:297.5px;height:27px"></div>
<svg class="a" style="left:20.9px;top:304.8px" width="11.600" height="11.400" viewBox="0 0 12 13"><rect x="0.500" y="0.500" width="11" height="12" fill="#e4e4e4"/><rect x="7" y="3" width="2.500" height="9" fill="#555"/><path d="M7 3 L8.200 0.800 L9.500 3Z" fill="#222"/><path d="M2 3 H5 M2 5 H5 M2 7 H5" stroke="#999" stroke-width="0.800"/></svg>
<svg class="a" style="left:143.0px;top:300.6px" width="70" height="20" viewBox="-60 -10 70 20">
<path d="M-46.800 -4.800 L-52.300 0.800" stroke="#9c9c9c" stroke-width="2.600" stroke-linecap="round" fill="none"/>
<circle cx="-46.600" cy="-5" r="0.700" fill="#2a2a2a"/>
<path d="M-55.400 2.200 A2.500 2.500 0 1 1 -52.600 4.600" stroke="#9c9c9c" stroke-width="1.900" fill="none"/>
<rect x="-30.300" y="-4.600" width="1.700" height="4.100" fill="#8a8a8a"/>
<path d="M-27.600 -4.600 L-24.800 -2.500 L-27.600 -0.400" stroke="#f0f0f0" stroke-width="1.500" fill="none"/>
<path d="M-23.300 0.400 L-26.100 2.500 L-23.300 4.600" stroke="#f0f0f0" stroke-width="1.500" fill="none"/>
<rect x="-22.300" y="0.400" width="1.900" height="4.300" fill="#c8c8c8"/>
<path d="M-2.800 -2.800 L2.800 2.800 M2.800 -2.800 L-2.800 2.800" stroke="#f4f4f4" stroke-width="2"/>
</svg>
<div class="a" style="left:0;top:325px;width:187.500px;height:204px;background:#212121"></div>
<svg class="a" style="left:2.3px;top:326.3px" width="34.600" height="34.4" viewBox="0 0 35 35.0"><rect width="35" height="35" fill="url(#cg)"/><path d="M2 8 H14" stroke="#d8d8d8" stroke-width="0.900" stroke-dasharray="1 1.600"/><path d="M2 11.2 H14" stroke="#d8d8d8" stroke-width="0.900" stroke-dasharray="1 1.600"/><path d="M2 14.399999999999999 H14" stroke="#d8d8d8" stroke-width="0.900" stroke-dasharray="1 1.600"/><path d="M2 17.599999999999998 H14" stroke="#d8d8d8" stroke-width="0.900" stroke-dasharray="1 1.600"/><path d="M2 20.799999999999997 H14" stroke="#d8d8d8" stroke-width="0.900" stroke-dasharray="1 1.600"/><path d="M2 23.999999999999996 H14" stroke="#d8d8d8" stroke-width="0.900" stroke-dasharray="1 1.600"/><path d="M2 27.199999999999996 H14" stroke="#d8d8d8" stroke-width="0.900" stroke-dasharray="1 1.600"/><path d="M19 4 Q27 1 31 6 Q33 14 31 22 Q32 30 26 32 Q19 33 17 26 Q18 18 16 12 Q15 6 19 4Z" fill="#8f969c"/><path d="M20 6 Q25 4 28 8 Q29 16 27 22 Q22 24 21 14Z" fill="#a8aeb3" opacity="0.700"/></svg>
<svg class="a" style="left:39.3px;top:326.3px" width="34.600" height="34.4" viewBox="0 0 35 35.0"><rect width="35" height="35" fill="url(#cg)"/><path d="M2 8 H14" stroke="#c4c4c4" stroke-width="0.900" stroke-dasharray="1 1.600"/><path d="M2 11.2 H14" stroke="#c4c4c4" stroke-width="0.900" stroke-dasharray="1 1.600"/><path d="M2 14.399999999999999 H14" stroke="#c4c4c4" stroke-width="0.900" stroke-dasharray="1 1.600"/><path d="M2 17.599999999999998 H14" stroke="#c4c4c4" stroke-width="0.900" stroke-dasharray="1 1.600"/><path d="M2 20.799999999999997 H14" stroke="#c4c4c4" stroke-width="0.900" stroke-dasharray="1 1.600"/><path d="M2 23.999999999999996 H14" stroke="#c4c4c4" stroke-width="0.900" stroke-dasharray="1 1.600"/><path d="M2 27.199999999999996 H14" stroke="#c4c4c4" stroke-width="0.900" stroke-dasharray="1 1.600"/><path d="M2 30.399999999999995 H14" stroke="#c4c4c4" stroke-width="0.900" stroke-dasharray="1 1.600"/><ellipse cx="9" cy="21" rx="6.500" ry="5.500" fill="#fcfcfc"/><path d="M3 14 L8 18 L3 22Z" fill="#fcfcfc"/><rect x="17" y="6" width="16" height="29" rx="2" fill="#2a62b4"/><path d="M17 8 Q17 6 19 6 H31 Q33 6 33 8 V15 H17Z" fill="#e8e8ec"/><path d="M20 18 V32" stroke="#5a8ad0" stroke-width="1.500" stroke-dasharray="2 1.500"/></svg>
<svg class="a" style="left:76.4px;top:326.3px" width="34.600" height="34.4" viewBox="0 0 35 35.0"><rect width="35" height="35" fill="url(#cg)"/><path d="M2 4 H15" stroke="#bcbcbc" stroke-width="0.900" stroke-dasharray="1 1.600"/><path d="M2 7.2 H15" stroke="#bcbcbc" stroke-width="0.900" stroke-dasharray="1 1.600"/><path d="M2 10.4 H15" stroke="#bcbcbc" stroke-width="0.900" stroke-dasharray="1 1.600"/><path d="M2 13.600000000000001 H15" stroke="#bcbcbc" stroke-width="0.900" stroke-dasharray="1 1.600"/><path d="M2 16.8 H15" stroke="#bcbcbc" stroke-width="0.900" stroke-dasharray="1 1.600"/><path d="M2 20.0 H15" stroke="#bcbcbc" stroke-width="0.900" stroke-dasharray="1 1.600"/><path d="M2 23.2 H15" stroke="#bcbcbc" stroke-width="0.900" stroke-dasharray="1 1.600"/><path d="M2 26.4 H15" stroke="#bcbcbc" stroke-width="0.900" stroke-dasharray="1 1.600"/><path d="M2 29.599999999999998 H15" stroke="#bcbcbc" stroke-width="0.900" stroke-dasharray="1 1.600"/><ellipse cx="8" cy="26" rx="5" ry="3.500" fill="#fcfcfc"/><rect x="20" y="5" width="8.500" height="30" fill="#4a82b8"/><rect x="20" y="5" width="8.500" height="5" fill="#9cc0e0"/><path d="M20 19 H28.500 M20 22 H28.500" stroke="#2a5a90" stroke-width="1"/><path d="M22 5 V35" stroke="#7aa8d8" stroke-width="1.200"/></svg>
<svg class="a" style="left:113.4px;top:326.3px" width="34.600" height="34.4" viewBox="0 0 35 35.0"><rect width="35" height="35" fill="url(#cg)"/><g filter="url(#sb)"><path d="M3 5 Q12 1 19 6 Q8 8 17 11 Q6 13 18 16 Q7 19 16 22 Q8 24 14 28" stroke="#6f9fd4" stroke-width="6" fill="none" stroke-linecap="round" opacity="0.800"/></g><path d="M25.5 5 Q28 8 28.5 13 Q30.5 17 30 22 V35 H21 V22 Q20.5 17 22.5 13 Q23 8 25.5 5Z" fill="#1a1a1a"/><path d="M23 14 Q24 24 23 34" stroke="#555" stroke-width="0.800" fill="none"/></svg>
<svg class="a" style="left:150.5px;top:326.3px" width="34.600" height="34.4" viewBox="0 0 35 35.0"><rect width="35" height="35" fill="url(#cg)"/><g filter="url(#sb)"><path d="M3 5 Q12 1 19 6 Q8 8 17 11 Q6 13 18 16 Q7 19 16 22 Q8 24 12 28" stroke="#f6a436" stroke-width="6" fill="none" stroke-linecap="round" opacity="0.850"/><path d="M8 22 Q10 26 12 28" stroke="#f08050" stroke-width="4" fill="none" stroke-linecap="round" opacity="0.700"/></g><path d="M25.5 5 Q28 8 28.5 13 Q30.5 17 30 22 V35 H21 V22 Q20.5 17 22.5 13 Q23 8 25.5 5Z" fill="#1a1a1a"/><path d="M23 14 Q24 24 23 34" stroke="#555" stroke-width="0.800" fill="none"/><path d="M30 5 L33 2.500 L33.500 4.500Z" fill="#555"/></svg>
<svg class="a" style="left:2.3px;top:363.2px" width="34.600" height="34.4" viewBox="0 0 35 35.0"><rect width="35" height="35" fill="url(#cg)"/><g filter="url(#sb)"><path d="M5 7 L16 3 M4 13 L17 8 M5 19 L18 14 M6 25 L17 20 M8 29 L15 26" stroke="#6f9fd4" stroke-width="4" stroke-linecap="round" opacity="0.850"/></g><path d="M25.5 4 L28.5 13 L26.8 19 L24.6 19 L22 13.500Z" fill="#a9adb3" stroke="#7c8187" stroke-width="0.500"/><path d="M25.5 4 L26 19 L24.6 19 L22 13.500Z" fill="#8d9298"/><path d="M24.2 19 H27.4 L28.8 35 H23.6Z" fill="#c08a48"/><path d="M24.2 19 H25.4 L25.6 35 H23.6Z" fill="#a8733a"/></svg>
<svg class="a" style="left:39.3px;top:363.2px" width="34.600" height="34.4" viewBox="0 0 35 35.0"><rect width="35" height="35" fill="url(#cg)"/><g filter="url(#sb)"><path d="M8 4 Q16 2 18 9 Q21 16 18 24 Q16 31 9 29 Q3 26 4 17 Q3 8 8 4Z" fill="#f0902a"/><path d="M5 10 Q3 18 6 26" stroke="#f5a850" stroke-width="2" fill="none"/></g><path d="M23.5 4 L26.5 13 L24.8 19 L22.6 19 L20 13.500Z" fill="#a9adb3" stroke="#7c8187" stroke-width="0.500"/><path d="M23.5 4 L24 19 L22.6 19 L20 13.500Z" fill="#8d9298"/><path d="M22.2 19 H25.4 L26.8 35 H21.6Z" fill="#c08a48"/><path d="M22.2 19 H23.4 L23.6 35 H21.6Z" fill="#a8733a"/><path d="M30 6 L33.500 3 L34 5Z" fill="#667"/></svg>
<svg class="a" style="left:76.4px;top:363.2px" width="34.600" height="34.4" viewBox="0 0 35 35.0"><rect width="35" height="35" fill="url(#cg)"/><path d="M5 6 Q16 2 17 8 Q16 13 6 12 Q3 15 8 16 Q18 14 18 19 Q16 24 7 22 Q4 25 9 27 Q17 26 18 29" stroke="#8a8a8a" stroke-width="1.6" fill="none" stroke-linecap="round" opacity="0.8"/><path d="M7 5 Q3 9 9 10 Q19 10 16 15 Q6 17 5 20 Q9 23 17 22 Q20 26 12 28" stroke="#8a8a8a" stroke-width="1.2800000000000002" fill="none" stroke-linecap="round" opacity="0.6400000000000001"/><path d="M26 3 Q27.8 7 27.44 10.500 H24.56 Q24.2 7 26 3Z" fill="#e8a840"/><rect x="24.4" y="10.500" width="3.200" height="10.500" fill="#a8a8a8"/><rect x="25.3" y="10.500" width="1" height="10.500" fill="#e8e8e8" opacity="0.600"/><rect x="24.1" y="21" width="3.800" height="14" fill="#e8b830"/><circle cx="5" cy="31" r="1" fill="#666"/></svg>
<svg class="a" style="left:113.4px;top:363.2px" width="34.600" height="34.4" viewBox="0 0 35 35.0"><rect width="35" height="35" fill="url(#cg)"/><path d="M5 6 Q16 2 17 8 Q16 13 6 12 Q3 15 8 16 Q18 14 18 19 Q16 24 7 22 Q4 25 9 27 Q17 26 18 29" stroke="#c8c8c8" stroke-width="1.2" fill="none" stroke-linecap="round" opacity="0.6"/><path d="M7 5 Q3 9 9 10 Q19 10 16 15 Q6 17 5 20 Q9 23 17 22 Q20 26 12 28" stroke="#c8c8c8" stroke-width="0.96" fill="none" stroke-linecap="round" opacity="0.48"/><path d="M26 3 Q27.8 7 27.44 10.500 H24.56 Q24.2 7 26 3Z" fill="#e8a040"/><rect x="24.4" y="10.500" width="3.200" height="10.500" fill="#a8a8a8"/><rect x="25.3" y="10.500" width="1" height="10.500" fill="#e8e8e8" opacity="0.600"/><rect x="24.1" y="21" width="3.800" height="14" fill="#e89830"/></svg>
<svg class="a" style="left:150.5px;top:363.2px" width="34.600" height="34.4" viewBox="0 0 35 35.0"><rect width="35" height="35" fill="url(#cg)"/><path d="M5 6 Q16 2 17 8 Q16 13 6 12 Q3 15 8 16 Q18 14 18 19 Q16 24 7 22 Q4 25 9 27 Q17 26 18 29" stroke="#707070" stroke-width="1.1" fill="none" stroke-linecap="round" opacity="0.9"/><path d="M7 5 Q3 9 9 10 Q19 10 16 15 Q6 17 5 20 Q9 23 17 22 Q20 26 12 28" stroke="#707070" stroke-width="0.8800000000000001" fill="none" stroke-linecap="round" opacity="0.7200000000000001"/><path d="M6 8 L18 24 M16 6 L6 26" stroke="#888" stroke-width="0.800" opacity="0.700"/><path d="M26 3 Q27.8 7 27.44 10.500 H24.56 Q24.2 7 26 3Z" fill="#f0d060"/><rect x="24.4" y="10.500" width="3.200" height="10.500" fill="#b8b8c0"/><rect x="25.3" y="10.500" width="1" height="10.500" fill="#e8e8e8" opacity="0.600"/><rect x="24.1" y="21" width="3.800" height="14" fill="#f0c830"/></svg>
<svg class="a" style="left:2.3px;top:400.2px" width="34.600" height="34.4" viewBox="0 0 35 35.0"><rect width="35" height="35" fill="url(#cg)"/><path d="M5 6 Q16 2 17 8 Q16 13 6 12 Q3 15 8 16 Q18 14 18 19 Q16 24 7 22 Q4 25 9 27 Q17 26 18 29" stroke="#d8d8d8" stroke-width="1" fill="none" stroke-linecap="round" opacity="0.7"/><path d="M7 5 Q3 9 9 10 Q19 10 16 15 Q6 17 5 20 Q9 23 17 22 Q20 26 12 28" stroke="#d8d8d8" stroke-width="0.8" fill="none" stroke-linecap="round" opacity="0.5599999999999999"/><path d="M25 3 Q26.8 7 26.44 10.500 H23.56 Q23.2 7 25 3Z" fill="#f0d860"/><rect x="23.4" y="10.500" width="3.200" height="10.500" fill="#c0c0c0"/><rect x="24.3" y="10.500" width="1" height="10.500" fill="#e8e8e8" opacity="0.600"/><rect x="23.1" y="21" width="3.800" height="14" fill="#f0d020"/></svg>
<svg class="a" style="left:39.3px;top:400.2px" width="34.600" height="34.4" viewBox="0 0 35 35.0"><rect width="35" height="35" fill="url(#cg)"/><path d="M5 6 Q16 2 17 8 Q16 13 6 12 Q3 15 8 16 Q18 14 18 19 Q16 24 7 22 Q4 25 9 27 Q17 26 18 29" stroke="#151515" stroke-width="1.7" fill="none" stroke-linecap="round" opacity="1"/><path d="M7 5 Q3 9 9 10 Q19 10 16 15 Q6 17 5 20 Q9 23 17 22 Q20 26 12 28" stroke="#151515" stroke-width="1.36" fill="none" stroke-linecap="round" opacity="0.8"/><circle cx="19" cy="6" r="1.500" fill="#333"/><circle cx="3" cy="27" r="1.500" fill="#333"/><path d="M25.5 3 Q27.9 7 27.42 10.500 H23.58 Q23.1 7 25.5 3Z" fill="#151515"/><rect x="23.9" y="10.500" width="3.200" height="10.500" fill="#909090"/><rect x="24.8" y="10.500" width="1" height="10.500" fill="#e8e8e8" opacity="0.600"/><rect x="23.6" y="21" width="3.800" height="14" fill="#d02020"/></svg>
<svg class="a" style="left:76.4px;top:400.2px" width="34.600" height="34.4" viewBox="0 0 35 35.0"><rect width="35" height="35" fill="url(#cg)"/><path d="M5 6 Q16 2 17 8 Q16 13 6 12 Q3 15 8 16 Q18 14 18 19 Q16 24 7 22 Q4 25 9 27 Q17 26 18 29" stroke="#2a2a2a" stroke-width="0.9" fill="none" stroke-linecap="round" opacity="0.9"/><path d="M7 5 Q3 9 9 10 Q19 10 16 15 Q6 17 5 20 Q9 23 17 22 Q20 26 12 28" stroke="#2a2a2a" stroke-width="0.7200000000000001" fill="none" stroke-linecap="round" opacity="0.7200000000000001"/><circle cx="19.500" cy="5" r="1" fill="#444"/><circle cx="3" cy="27" r="1.300" fill="#444"/><path d="M25.5 3 Q27.1 7 26.78 10.500 H24.22 Q23.9 7 25.5 3Z" fill="#222"/><rect x="23.9" y="10.500" width="3.200" height="10.500" fill="#909090"/><rect x="24.8" y="10.500" width="1" height="10.500" fill="#e8e8e8" opacity="0.600"/><rect x="23.6" y="21" width="3.800" height="14" fill="#d02020"/></svg>
<svg class="a" style="left:113.4px;top:400.2px" width="34.600" height="34.4" viewBox="0 0 35 35.0"><rect width="35" height="35" fill="url(#cg)"/><path d="M9 4 Q7 10 11 13 Q16 17 13 23 Q10 28 11 30" stroke="#f2cc50" stroke-width="3.200" fill="none" stroke-linecap="round"/><path d="M24.5 3 Q26.3 7 25.94 10.500 H23.06 Q22.7 7 24.5 3Z" fill="#333"/><rect x="22.9" y="10.500" width="3.200" height="10.500" fill="#a8a8a8"/><rect x="23.8" y="10.500" width="1" height="10.500" fill="#e8e8e8" opacity="0.600"/><rect x="22.6" y="21" width="3.800" height="14" fill="#d89030"/></svg>
<svg class="a" style="left:150.5px;top:400.2px" width="34.600" height="34.4" viewBox="0 0 35 35.0"><rect width="35" height="35" fill="url(#cg)"/><g filter="url(#sb)"><path d="M5 4 Q2 14 4 24 Q8 31 17 30 Q21 22 19 10 Q16 3 5 4Z" fill="#d8923e" opacity="0.900"/><path d="M9 6 Q7 16 10 28 M13 7 Q14 18 14 28" stroke="#e8b070" stroke-width="1.500" fill="none" opacity="0.800"/></g><path d="M24.5 3 Q26.7 7 26.26 10.500 H22.74 Q22.3 7 24.5 3Z" fill="#222"/><rect x="22.9" y="10.500" width="3.200" height="10.500" fill="#888"/><rect x="23.8" y="10.500" width="1" height="10.500" fill="#e8e8e8" opacity="0.600"/><rect x="22.6" y="21" width="3.800" height="14" fill="#9a6a38"/><path d="M28 5 L31.500 2.500 L31 5Z" fill="#667"/></svg>
<svg class="a" style="left:2.3px;top:437.2px" width="34.600" height="34.4" viewBox="0 0 35 35.0"><rect width="35" height="35" fill="url(#cg)"/><g filter="url(#sb)"><ellipse cx="11" cy="9" rx="8" ry="6" fill="#e2645a" opacity="0.850"/><ellipse cx="11" cy="22" rx="7.500" ry="7" fill="#e8847a" opacity="0.800"/><ellipse cx="14" cy="15" rx="4" ry="4" fill="#e06a60" opacity="0.800"/></g><path d="M28 2 Q33 8 30.500 14 Q27 16 24.500 13 Q23 7 28 2Z" fill="#2a2a2a"/><rect x="25.500" y="14" width="4" height="5" fill="#887"/><rect x="25.200" y="19" width="4.600" height="16" fill="#b88848"/></svg>
<svg class="a" style="left:39.3px;top:437.2px" width="34.600" height="34.4" viewBox="0 0 35 35.0"><rect width="35" height="35" fill="url(#cg)"/><g filter="url(#sb)"><path d="M6 6 Q14 3 19 6 M5 11 Q12 9 18 12" stroke="#b89088" stroke-width="1.500" fill="none" opacity="0.700"/><path d="M6 17 Q13 14 19 18 Q12 21 7 23 Q12 27 18 27" stroke="#8a4840" stroke-width="3.500" fill="none" stroke-linecap="round" opacity="0.850"/></g><path d="M26 2 Q32 10 30 17 Q26 20 22.500 17 Q21 10 26 2Z" fill="#1c1c1c"/><rect x="24" y="18" width="4" height="5" fill="#776"/><rect x="24" y="23" width="4" height="12" fill="#8a6038"/><path d="M30 3 L33.500 1.500 L33 4Z" fill="#667"/></svg>
<svg class="a" style="left:76.4px;top:437.2px" width="34.600" height="34.4" viewBox="0 0 35 35.0"><rect width="35" height="35" fill="url(#cg)"/><path d="M9 4 Q15 16 14 20 Q13 25 9 25 Q5 25 4.500 20 Q4.500 15 9 4Z" fill="#5c92d2"/><path d="M8 12 Q6 18 7 22" stroke="#a8c8f0" stroke-width="1.500" fill="none"/><path d="M25 2 Q31 9 28.500 15 H21.500 Q19 9 25 2Z" fill="#484c50"/><rect x="22.500" y="15" width="5" height="7" fill="#c8a070"/><path d="M21 20 H31 M21 23 H31" stroke="#887" stroke-width="0.800"/><rect x="23" y="22" width="4.500" height="13" fill="#b08048"/></svg>
<svg class="a" style="left:113.4px;top:437.2px" width="34.600" height="34.4" viewBox="0 0 35 35.0"><rect width="35" height="35" fill="url(#cg)"/><g filter="url(#sb)"><rect x="2" y="3" width="11" height="10" fill="#808080" opacity="0.850"/><rect x="2" y="14" width="11" height="13" fill="#a4a4a4" opacity="0.750"/></g><path d="M23 5 Q31 6 32.500 16 Q33 28 26 31 Q17 31 15 21 Q14 8 23 5Z" fill="#bea052"/><path d="M19 12 Q24 9 28 14 M18 20 Q24 24 30 20" stroke="#a88028" stroke-width="1.200" fill="none" stroke-dasharray="1.500 1"/></svg>
<svg class="a" style="left:150.5px;top:437.2px" width="34.600" height="34.4" viewBox="0 0 35 35.0"><rect width="35" height="35" fill="url(#cg)"/><path d="M5 6 Q9 3 12 6 Q9 9 6 8 Q4 12 8 12 Q13 10 13 14 Q8 16 5 15 Q4 19 9 19 Q13 18 13 22 Q8 23 6 22 Q5 26 10 26 Q13 26 12 29" stroke="#303030" stroke-width="0.900" fill="none"/><path d="M8 5 Q5 8 9 10 Q12 12 8 14 Q5 17 9 18 Q12 21 8 23 Q6 26 9 28" stroke="#555" stroke-width="0.700" fill="none"/><path d="M24.500 4 Q29 12 29 20 V35 H20 V20 Q20 12 24.500 4Z" fill="#9a6a48"/><path d="M24.500 4 Q26 10 26 18 V35 H23 V18 Q23 10 24.500 4Z" fill="#4a3020"/></svg>
<svg class="a" style="left:2.3px;top:474.1px" width="34.600" height="34.4" viewBox="0 0 35 35.0"><rect width="35" height="35" fill="url(#cg)"/><g font-family="Liberation Sans,sans-serif" font-weight="bold" fill="#151515" stroke="#151515" stroke-width="0.250"><text x="4.700" y="9.200" font-size="5.400" textLength="13.600" lengthAdjust="spacingAndGlyphs">HELLO</text><text x="3.200" y="16.300" font-size="5.400" textLength="19.400" lengthAdjust="spacingAndGlyphs">MYPAINT</text><text x="9.500" y="22.200" font-size="5" textLength="6.500" lengthAdjust="spacingAndGlyphs">!!!</text></g><path d="M6 24.500 H19 M7.500 26.500 H17.500 L15.500 30 H9.500Z M8 31.500 H17" stroke="#222" stroke-width="1" fill="#777"/><path d="M26.500 9.500 V13 M25 13 H28 V18 H25Z" fill="#999" stroke="#888" stroke-width="0.600"/><rect x="24.500" y="18" width="4.300" height="15" fill="#a4a4a4"/><rect x="0.800" y="0.800" width="33.400" height="33.400" fill="none" stroke="#1c55a8" stroke-width="1.600"/></svg>
<div class="a" style="left:1.0px;top:472.8px;width:37.200px;height:37px;border:1.500px solid #1c55a8"></div>
<svg class="a" style="left:39.3px;top:474.1px" width="34.600" height="34.4" viewBox="0 0 35 35.0"><rect width="35" height="35" fill="url(#cg)"/><path d="M7 6 Q13 1 14 6 Q8 9 7 13 Q13 10 15 13 Q9 16 8 19 Q12 18 14 20" stroke="#151515" stroke-width="1.600" fill="none" stroke-linecap="round"/><path d="M5 22 H15 V31 H5Z M7 21 V33 M3 24 H17" stroke="#333" stroke-width="0.800" fill="none"/><path d="M24 3 L26 9 V35 H22 V9Z" fill="#181818"/><path d="M23 4 L25 4 L24.500 9 H23.500Z" fill="#ccc"/><path d="M21 23 H27" stroke="#e02020" stroke-width="1"/></svg>
<svg class="a" style="left:76.4px;top:474.1px" width="34.600" height="34.4" viewBox="0 0 35 35.0"><rect width="35" height="35" fill="url(#cg)"/><path d="M4 5 H15 V13 H4 V21 M8 21 H14 V27 H8Z M7 30 H14" stroke="#151515" stroke-width="1.500" fill="none"/><path d="M24.500 6 L26 9 V17 H23 V9Z" fill="#999"/><rect x="22.500" y="15" width="4.500" height="6" fill="#a8a0a0"/><rect x="20" y="21" width="10" height="14" rx="1.500" fill="#5a3028"/></svg>
<svg class="a" style="left:113.4px;top:474.1px" width="34.600" height="34.4" viewBox="0 0 35 35.0"><rect width="35" height="35" fill="url(#cg)"/><path d="M6 6 Q9 3 12 7 Q5 10 5 13 Q7 17 14 15 Q16 19 8 21 Q3 24 7 27 Q13 29 16 26" stroke="#151515" stroke-width="3.200" fill="none" stroke-linecap="round"/><circle cx="11" cy="31.500" r="1.700" fill="#151515"/><path d="M22.500 3 Q27 5 26.500 14 H22Z" fill="#222"/><path d="M22 14 H26.500 L27 19 H22Z" fill="#aaa"/><rect x="22.500" y="19" width="4.200" height="16" fill="#282828"/></svg>
<svg class="a" style="left:150.5px;top:474.1px" width="34.600" height="34.4" viewBox="0 0 35 35.0"><rect width="35" height="35" fill="url(#cg)"/><circle cx="7" cy="10" r="4.500" fill="#141414"/><circle cx="13" cy="13" r="4" fill="#141414"/><circle cx="16" cy="18" r="3.500" fill="#141414"/><circle cx="11" cy="20" r="3.500" fill="#141414"/><circle cx="6" cy="25" r="2.800" fill="#141414"/><path d="M7 5 Q9 3 11 6 L13 10 L8 12Z" fill="#141414"/><path d="M24 5 L28 7 V14 H23 V8Z" fill="#333"/><rect x="21" y="14" width="10" height="21" rx="1.500" fill="#383838"/><rect x="22" y="16" width="2" height="18" fill="#666"/></svg>
<svg class="a" style="left:2.3px;top:511.0px" width="34.600" height="12" viewBox="0 0 35 12.2"><rect width="35" height="35" fill="url(#cg)"/><circle cx="4" cy="4" r="0.800" fill="#333"/><circle cx="8" cy="7" r="0.700" fill="#c44"/><circle cx="12" cy="5" r="0.800" fill="#333"/><circle cx="6" cy="10" r="0.800" fill="#333"/><circle cx="14" cy="10" r="0.600" fill="#333"/><circle cx="10" cy="3" r="0.600" fill="#333"/><rect x="25" y="8" width="4" height="5" fill="#888"/></svg>
<svg class="a" style="left:39.3px;top:511.0px" width="34.600" height="12" viewBox="0 0 35 12.2"><rect width="35" height="35" fill="url(#cg)"/><ellipse cx="10" cy="9" rx="7" ry="5" fill="#777" opacity="0.700"/><rect x="23" y="7" width="5" height="6" fill="#555"/></svg>
<svg class="a" style="left:76.4px;top:511.0px" width="34.600" height="12" viewBox="0 0 35 12.2"><rect width="35" height="35" fill="url(#cg)"/><ellipse cx="11" cy="9" rx="9" ry="5" fill="#5a7ab8" opacity="0.800"/></svg>
<svg class="a" style="left:113.4px;top:511.0px" width="34.600" height="12" viewBox="0 0 35 12.2"><rect width="35" height="35" fill="url(#cg)"/><ellipse cx="10" cy="10" rx="7" ry="4.500" fill="#8a8a90" opacity="0.800"/><ellipse cx="25" cy="10" rx="5" ry="4" fill="#d89860" opacity="0.900"/></svg>
<svg class="a" style="left:150.5px;top:511.0px" width="34.600" height="12" viewBox="0 0 35 12.2"><rect width="35" height="35" fill="url(#cg)"/><path d="M9 12 L10 8 L11 12Z M26 12 L27 7 L28 12Z" fill="#ccc"/></svg>
<svg width="0" height="0" style="position:absolute"><defs><linearGradient id="cg" x1="0" y1="0" x2="0" y2="1"><stop offset="0" stop-color="#fdfdfd"/><stop offset="0.550" stop-color="#f0f0f0"/><stop offset="1" stop-color="#d6d6d6"/></linearGradient><filter id="sb" x="-20%" y="-20%" width="140%" height="140%"><feGaussianBlur stdDeviation="0.700"/></filter></defs></svg>
<div class="a" style="left:0;top:523px;width:218px;height:6px;background:#222"></div><!--RIGHT_E-->
</div>
<div id="status" class="a">
<!--STATUS_S--><svg class="a" style="left:5px;top:4px" width="16" height="16" viewBox="5 591 16 16"><path d="M16.300 593.700 L14.400 596.500" stroke="#f4f4f4" stroke-width="3.200" stroke-linecap="round"/><path d="M14.200 596.300 L10.300 602.600" stroke="#f4f4f4" stroke-width="1.800"/><path d="M12.300 595.600 L16 598.200" stroke="#f4f4f4" stroke-width="1.400"/><circle cx="9.600" cy="604" r="1.200" fill="#f4f4f4"/></svg>
<div class="a" style="left:26.800px;top:1px;width:65.700px;height:24px;background:#54df3c;border:1px solid #2c2c2c;border-bottom:0"></div>
<svg class="a" style="left:99px;top:4px" width="16" height="16" viewBox="99 591 16 16"><path d="M101 594.600 H107.500 M101 598.200 H105 M101 603 H110" stroke="#f4f4f4" stroke-width="1.500"/><path d="M111.300 593.300 L112.700 594.500 L106.600 601.300 L104.600 602 L105.200 600Z" fill="#f4f4f4"/></svg>
<svg class="a" style="left:126px;top:4px" width="14" height="14" viewBox="126 591 14 14"><path d="M127.700 593.400 H133.500 V602.500 L130.600 599.800 L127.700 602.500Z" fill="#f4f4f4"/><path d="M135.200 594.800 V600.200 M132.500 597.500 H137.900" stroke="#343434" stroke-width="3.200"/><path d="M135.200 595.300 V599.700 M133 597.500 H137.400" stroke="#f4f4f4" stroke-width="1.700"/></svg>
<div class="a" style="left:155.900px;top:5.3px;font-size:5.700px;letter-spacing:-0.260px;line-height:7px;color:#dedede;white-space:nowrap">Z: 164.9%</div>
<div class="a" style="left:155.900px;top:13.3px;font-size:5.700px;letter-spacing:-0.220px;line-height:7px;color:#dedede;white-space:nowrap">R: +0.0°</div>
<svg class="a" style="left:203px;top:5px" width="14" height="14" viewBox="203 592 14 14"><path d="M214.400 593.400 L215 594 L209.800 601.600 L208 600.300Z" fill="#f4f4f4"/><path d="M208 599.800 Q210.500 600.800 209.700 602.600 Q208 604.800 204.300 604.700 Q206.600 603 208 599.800Z" fill="#f4f4f4"/></svg>
<div class="a" style="left:227.500px;top:7.3px;font-size:8.530px;line-height:10px;color:#e8e8e8;white-space:nowrap">Paint free-form brush strokes</div>
<svg class="a" style="left:965px;top:1.3px" width="33" height="23.700" viewBox="0 0 33 23.700"><defs><linearGradient id="pg" x1="0" y1="0" x2="0" y2="1"><stop offset="0" stop-color="#fdfdfd"/><stop offset="1" stop-color="#ececec"/></linearGradient></defs><rect width="33" height="33" fill="url(#pg)"/><g font-family="Liberation Sans,sans-serif" font-weight="bold" fill="#151515" stroke="#151515" stroke-width="0.250"><text x="3.700" y="7.800" font-size="5.300" textLength="13.500" lengthAdjust="spacingAndGlyphs">HELLO</text><text x="3" y="14.800" font-size="5.300" textLength="17.500" lengthAdjust="spacingAndGlyphs">MYPAINT</text><text x="9" y="19.400" font-size="4.600" textLength="6.500" lengthAdjust="spacingAndGlyphs">!!!</text></g><path d="M6 22.500 H18" stroke="#333" stroke-width="1"/><path d="M25.500 10 V13 M24 13 H27 V18 H24Z" fill="#999" stroke="#888" stroke-width="0.600"/><rect x="23.500" y="18" width="4" height="8" fill="#a8a8a8"/></svg>
<svg class="a" style="left:1003px;top:3px" width="17" height="17" viewBox="0 0 17 17"><circle cx="6.500" cy="7.500" r="3.300" stroke="#f4f4f4" stroke-width="1.500" fill="none"/><path d="M6.500 2 V5 M6.500 10 V13 M1 7.500 H4 M9 7.500 H12" stroke="#f4f4f4" stroke-width="1.400"/><path d="M12 2.500 Q16 5 13 9 L11 8 Q12.500 5 12 2.500Z M11 10 L13.500 11.500 Q12 15 8 15.500 Q10.500 13 11 10Z" fill="#f4f4f4"/></svg><!--STATUS_E-->
</div>
</body></html>
